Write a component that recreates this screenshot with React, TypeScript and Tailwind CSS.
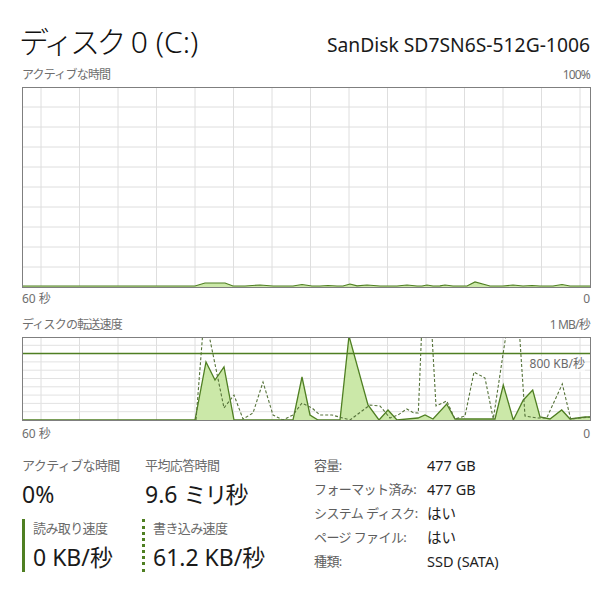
const FONT = "font-['Noto_Sans','Noto_Sans_CJK_JP',sans-serif]"

const VLINES = Array.from({ length: 15 }, (_, k) => 41 + 38.5 * k)

const ACTIVE_POINTS = [
    [23, 286], [195, 286], [205, 283], [225, 283], [233, 286],
    [245, 286], [260, 285], [273, 286],
    [293, 286], [302, 284.5], [312, 286],
    [320, 286], [328, 285.5], [337, 286],
    [343, 286], [350, 284], [357, 285.8], [367, 285], [380, 286],
    [397, 286], [407, 285], [417, 286],
    [422, 286], [427, 285], [433, 286],
    [440, 285.8], [445, 285], [453, 286],
    [467, 286], [475, 282], [490, 286],
    [503, 286], [513, 285], [523, 286], [532, 285.5], [540, 286],
    [553, 286], [562, 284.5], [570, 286], [590, 286]
]

const READ_POINTS = [
    [23, 420], [195, 420], [206, 362], [215, 380], [224, 367], [234, 420],
    [293, 420], [302, 377], [310, 415], [318, 420],
    [340, 420], [349, 336], [368, 405], [379, 420], [388, 410], [397, 420],
    [418, 418], [425, 415], [433, 419], [446.7, 404], [455, 419],
    [495, 419], [503.3, 385], [513.3, 420], [523.3, 400], [532.7, 390], [540, 417],
    [550, 419], [561.7, 410], [570, 419], [585, 417], [590, 417]
]

const WRITE_POINTS = [
    [196, 420], [203, 330], [208, 330], [224, 408], [234, 395], [243, 419],
    [253, 413], [263, 382], [273, 415], [283, 420], [293, 415], [302, 403],
    [312, 408], [320, 415], [332, 415], [350, 420], [370, 405], [380, 406],
    [390, 418], [398, 415], [406.7, 409], [413.3, 412.7], [418.3, 413],
    [421.7, 330], [431.7, 330], [436, 406], [446.7, 401], [455, 419],
    [465, 416], [474, 372], [485, 378], [493.3, 419], [506.7, 330],
    [519.3, 330], [525, 416], [536.7, 418], [546.7, 418], [562.3, 384],
    [570.7, 419], [580, 418], [590, 417]
]

const toPoints = (pts: number[][]) => pts.map(([x, y]) => `${x},${y}`).join(" ")

const ActiveChart = () => {
    const hLines = Array.from({ length: 9 }, (_, i) => 107 + 20 * i)
    return (
        <div className="ml-[22px] mt-[3px] w-[569px] h-[201px] border border-[#7f7f7f] bg-white">
            <svg width={567} height={199} viewBox="23 88 567 199" className="block">
                {VLINES.map((x) => (
                    <line key={x} x1={x} y1={88} x2={x} y2={287} stroke="#dedede" strokeWidth={1} />
                ))}
                {hLines.map((y) => (
                    <line key={y} x1={23} y1={y} x2={590} y2={y} stroke="#dedede" strokeWidth={1} />
                ))}
                <polygon
                    points={toPoints([...ACTIVE_POINTS, [590, 290], [23, 290]])}
                    fill="#cbe8a8"
                    stroke="none"
                />
                <polyline points={toPoints(ACTIVE_POINTS)} fill="none" stroke="#4f7f22" strokeWidth={1.2} />
            </svg>
        </div>
    )
}

const TransferChart = () => {
    const hLines = Array.from({ length: 9 }, (_, i) => 420 - 8.3 * (i + 1))
    return (
        <div className="relative ml-[22px] mt-[3px] w-[569px] h-[84px] border border-[#7f7f7f] bg-white">
            <svg width={567} height={82} viewBox="23 338 567 82" className="block">
                {VLINES.map((x) => (
                    <line key={x} x1={x} y1={338} x2={x} y2={420} stroke="#dedede" strokeWidth={1} />
                ))}
                {hLines.map((y) => (
                    <line key={y} x1={23} y1={y} x2={590} y2={y} stroke="#e2e2e2" strokeWidth={1} />
                ))}
                <polygon points={toPoints([...READ_POINTS, [590, 424], [23, 424]])} fill="#cbe8a8" stroke="none" />
                <polyline points={toPoints(READ_POINTS)} fill="none" stroke="#4f7f22" strokeWidth={1.3} />
                <polyline
                    points={toPoints(WRITE_POINTS)}
                    fill="none"
                    stroke="#56733a"
                    strokeWidth={1.1}
                    strokeDasharray="3 2"
                />
                <line x1={23} y1={353.5} x2={590} y2={353.5} stroke="#4f7f22" strokeWidth={1.5} />
            </svg>
            <span className="absolute right-[5px] top-[18px] text-[12px] leading-[16px] text-[#6a6a6a] bg-white/70">
                800 KB/秒
            </span>
        </div>
    )
}

const AxisRow = ({ left, right, className }: { left: string; right: string; className: string }) => (
    <div className={`flex justify-between items-center pl-[22px] pr-[25px] h-[18px] text-[12px] text-[#6e6e6e] ${className}`}>
        <span>{left}</span>
        <span>{right}</span>
    </div>
)

const Stat = ({ label, value, unit }: { label: string; value: string; unit?: string }) => (
    <div className="flex flex-col">
        <span className="h-[20px] leading-[20px] text-[13px] text-[#6a6a6a] tracking-[-0.6px]">{label}</span>
        <span className="mt-[5px] h-[28px] leading-[28px] text-[23px] text-[#1a1a1a] whitespace-nowrap">
            {value}
            {unit && <span className="tracking-[-2px]">{unit}</span>}
        </span>
    </div>
)

const DETAILS = [
    ["容量:", "477 GB"],
    ["フォーマット済み:", "477 GB"],
    ["システム ディスク:", "はい"],
    ["ページ ファイル:", "はい"],
    ["種類:", "SSD (SATA)"]
]

const App = () => {
    return (
        <div className={`w-[615px] h-[597px] bg-white overflow-hidden ${FONT}`}>
            <div className="flex justify-between items-center pl-[19px] pr-[25px] pt-[20px] h-[64px]">
                <span className="text-[30px] leading-[44px] font-light text-[#111] whitespace-nowrap">
                    <span className="tracking-[-3.5px]">ディスク</span> 0 (C:)
                </span>
                <span className="mt-[6px] text-[19.3px] leading-[28px] text-[#1a1a1a]">SanDisk SD7SN6S-512G-1006</span>
            </div>
            <AxisRow left="アクティブな時間" right="100%" className="mt-[2px] tracking-[-0.8px]" />
            <ActiveChart />
            <AxisRow left="60 秒" right="0" className="mt-[2px]" />
            <AxisRow left="ディスクの転送速度" right="1 MB/秒" className="mt-[8px] tracking-[-0.8px]" />
            <TransferChart />
            <AxisRow left="60 秒" right="0" className="mt-[4px]" />

            <div className="flex mt-[10px]">
                <div className="w-[292px] pl-[22px]">
                    <div className="flex pt-[2px]">
                        <div className="w-[123px]">
                            <Stat label="アクティブな時間" value="0%" />
                        </div>
                        <Stat label="平均応答時間" value="9.6 " unit="ミリ秒" />
                    </div>
                    <div className="flex mt-[11px]">
                        <div className="w-[120px] flex">
                            <div className="w-[3px] h-[53px] bg-[#4f7f22]" />
                            <div className="pl-[8px] -mt-[1px]">
                                <Stat label="読み取り速度" value="0 KB/秒" />
                            </div>
                        </div>
                        <div className="flex">
                            <div className="w-0 h-[53px] border-l-[3px] border-dotted border-[#4f7f22]" />
                            <div className="pl-[8px] -mt-[1px]">
                                <Stat label="書き込み速度" value="61.2 KB/秒" />
                            </div>
                        </div>
                    </div>
                </div>
                <div className="ml-[22px] flex flex-col mt-[1px]">
                    {DETAILS.map(([label, value]) => (
                        <div key={label} className="flex h-[24px] items-center">
                            <span className="w-[113px] text-[13px] text-[#5e5e5e] tracking-[-0.6px]">{label}</span>
                            <span className="text-[14.5px] text-[#1e1e1e]">{value}</span>
                        </div>
                    ))}
                </div>
            </div>
        </div>
    )
}

export default App
